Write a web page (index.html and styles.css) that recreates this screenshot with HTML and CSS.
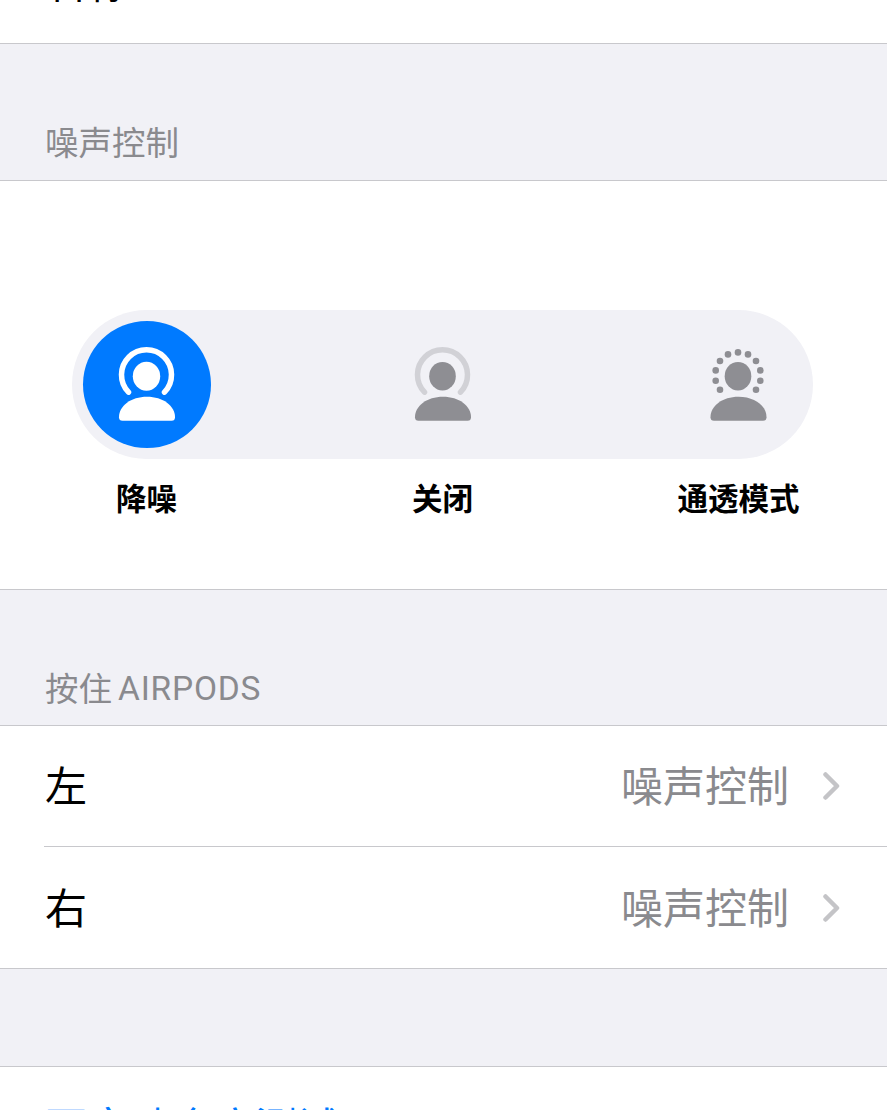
FILE: index.html
```html
<!doctype html>
<html lang="zh-CN">
	<head>
		<meta charset="UTF-8" />
		<meta name="viewport" content="width=device-width, initial-scale=1.0" />
		<title>AirPods</title>
		<link rel="stylesheet" href="styles.css">
	</head>

	<body>
		<div class="topRow"><span>名称</span></div>

		<h2 class="sectionTitle first">噪声控制</h2>
		<section class="modes">
			<div class="modeTrack">
				<button class="modeButton active">
					<svg viewBox="0 -0.700 127 127" width="127" height="127">
						<path class="ring" d="M45.500 70.500A25 25 0 1 1 81.500 70.500" />
						<ellipse class="head" cx="63.500" cy="54.500" rx="13.700" ry="14.500" />
						<path class="body" d="M36 95.500Q36 99 39.500 99H88.500Q92 99 92 95.500C92 84 80 75 64 75C48 75 36 84 36 95.500Z" />
					</svg>
				</button>
				<button class="modeButton">
					<svg viewBox="0 -0.700 127 127" width="127" height="127">
						<path class="ring" d="M45.500 70.500A25 25 0 1 1 81.500 70.500" />
						<ellipse class="head" cx="63.500" cy="54.500" rx="13.300" ry="14.300" />
						<path class="body" d="M36 95.500Q36 99 39.500 99H88.500Q92 99 92 95.500C92 84 80 75 64 75C48 75 36 84 36 95.500Z" />
					</svg>
				</button>
				<button class="modeButton">
					<svg viewBox="0 -0.700 127 127" width="127" height="127">
						<g class="dots">
							<circle cx="45" cy="68" r="3.300" />
							<circle cx="40.700" cy="59" r="3.300" />
							<circle cx="40.700" cy="48.700" r="3.300" />
							<circle cx="45" cy="39.300" r="3.300" />
							<circle cx="53" cy="32.700" r="3.300" />
							<circle cx="63" cy="30.700" r="3.300" />
							<circle cx="73" cy="32.700" r="3.300" />
							<circle cx="81" cy="39.300" r="3.300" />
							<circle cx="85.300" cy="48.700" r="3.300" />
							<circle cx="85.300" cy="59" r="3.300" />
							<circle cx="81" cy="68" r="3.300" />
						</g>
						<ellipse class="head" cx="63" cy="54.500" rx="13.300" ry="14.300" />
						<path class="body" d="M35.500 95.500Q35.500 99 39 99H88Q91.500 99 91.500 95.500C91.500 84 79.500 75 63.500 75C47.500 75 35.500 84 35.500 95.500Z" />
					</svg>
				</button>
			</div>
			<div class="modeLabels">
				<span>降噪</span>
				<span>关闭</span>
				<span>通透模式</span>
			</div>
		</section>

		<h2 class="sectionTitle lower">按住 <span class="latin">AIRPODS</span></h2>
		<section class="list">
			<div class="listRow">
				<span class="rowName">左</span>
				<span class="rowValue">噪声控制</span>
				<svg class="chevron" viewBox="0 0 18 30" width="18" height="30"><path d="M3.500 3.500L15 15L3.500 26.500" /></svg>
			</div>
			<div class="listRow">
				<span class="rowName">右</span>
				<span class="rowValue">噪声控制</span>
				<svg class="chevron" viewBox="0 0 18 30" width="18" height="30"><path d="M3.500 3.500L15 15L3.500 26.500" /></svg>
			</div>
		</section>

		<div class="spacer"></div>
		<section class="linkRow"><a href="#">耳塞贴合度测试</a></section>
	</body>
</html>
```

FILE: styles.css
```css
*,
*::before,
*::after {
	box-sizing: border-box;
	margin: 0;
	padding: 0;
}

html,
body {
	height: 1110px;
	overflow: hidden;
}

body {
	background-color: #f1f1f6;
	font-family: Inter, 'Noto Sans CJK SC', sans-serif;
	color: #000;
}

.topRow {
	height: 44px;
	background: #fff;
	border-bottom: 1px solid #c8c8cc;
	overflow: hidden;
	padding-left: 45px;
	font-size: 42px;
	line-height: 4px;

	span {
		display: block;
		margin-top: -19px;
	}
}

.sectionTitle {
	height: 136px;
	padding: 0 0 15px 45px;
	display: flex;
	align-items: flex-end;
	column-gap: 6px;
	font-size: 33.500px;
	line-height: 44px;
	font-weight: 400;
	color: #8a8a8e;
	border-bottom: 1px solid #c8c8cc;
}

.sectionTitle.first {
	height: 137px;
}

.sectionTitle.lower {
	padding-bottom: 14px;
}

.latin {
	font-family: Roboto, sans-serif;
	letter-spacing: 0.800px;
}

.modes {
	height: 409px;
	background: #fff;
	border-bottom: 1px solid #c8c8cc;
	padding: 129px 74px 0 72px;
}

.modeTrack,
.modeLabels {
	display: flex;
	justify-content: space-between;
}

.modeTrack {
	background: #f1f1f6;
	border-radius: 75px;
	padding: 11px;
	height: 149px;
}

.modeButton {
	width: 127px;
	height: 127px;
	border: 0;
	border-radius: 50%;
	background: transparent;
}

.modeButton svg {
	display: block;
}

.modeButton .ring {
	fill: none;
	stroke: #d1d1d6;
	stroke-width: 5.500;
	stroke-linecap: round;
}

.modeButton .head,
.modeButton .body,
.modeButton .dots {
	fill: #8e8e93;
}

.modeButton.active {
	background: #007aff;
	width: 128px;
	margin-right: -1px;
}

.modeButton.active .ring {
	stroke: #fff;
}

.modeButton.active .head,
.modeButton.active .body {
	fill: #fff;
}

.modeLabels {
	padding: 19px 11px 0;

	span {
		width: 127px;
		text-align: center;
		white-space: nowrap;
		font-size: 30.500px;
		line-height: 42px;
		font-weight: 700;
	}
}

.list {
	background: #fff;
	border-bottom: 1px solid #c8c8cc;
}

.listRow {
	height: 121px;
	margin-left: 44px;
	padding: 0 47px 0 1px;
	display: flex;
	align-items: center;
	border-bottom: 1px solid #c8c8cc;
	font-size: 42px;
}

.listRow:last-child {
	border-bottom: 0;
}

.rowName {
	flex: 1;
	margin-bottom: 5px;
}

.rowValue {
	color: #8a8a8e;
	margin-bottom: 5px;
}

.chevron {
	margin-left: 33px;
	fill: none;
	stroke: #c4c4c7;
	stroke-width: 4.500;
	stroke-linecap: round;
	stroke-linejoin: round;
}

.spacer {
	height: 98px;
	border-bottom: 1px solid #c8c8cc;
}

.linkRow {
	height: 120px;
	background: #fff;
	padding: 33px 0 0 45px;
	font-size: 42px;
	line-height: 56px;

	a {
		color: #007aff;
		text-decoration: none;
	}
}
```
